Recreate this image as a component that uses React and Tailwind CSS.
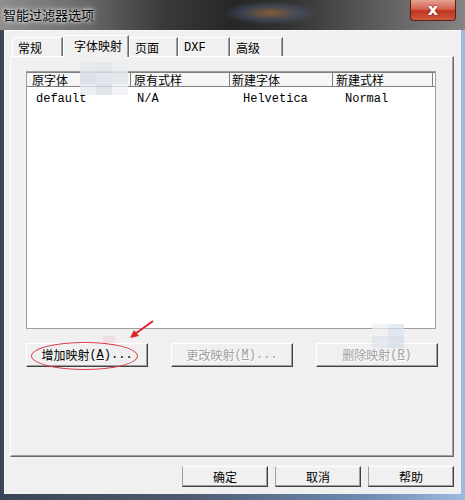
import React from "react";

const cjk = "[font-family:'Noto_Sans_CJK_SC','Liberation_Sans',sans-serif]";
const mono = "[font-family:'Liberation_Mono',monospace]";

function Tab({ label, w, selected, latin }) {
  if (selected) {
    return (
      <div
        className={`relative z-10 -mb-px flex h-[22px] ${w} items-start justify-center border-l border-t border-white bg-[#f0f0f0] pt-[1px] pl-[4px] shadow-[inset_-1px_0_#a0a0a0] border-r border-r-[#696969] rounded-tl-[2px] text-[12px] text-black`}
      >
        {label}
      </div>
    );
  }
  return (
    <div
      className={`flex h-[19px] ${w} items-start justify-start border-l border-t border-white bg-[#f0f0f0] pt-[1px] pl-[5px] shadow-[inset_-1px_0_#a0a0a0] border-r border-r-[#696969] rounded-tl-[2px] text-[12px] text-black ${latin ? mono : ""}`}
    >
      {label}
    </div>
  );
}

function Btn({ label, key1, tail, w, disabled }) {
  return (
    <div
      className={`flex h-[24px] ${w} items-center justify-center border border-t-white border-l-white border-r-[#404040] border-b-[#404040] bg-[#f0f0f0] shadow-[inset_-1px_-1px_#a0a0a0] text-[12px] ${
        disabled ? "text-[#a0a0a0] [text-shadow:1px_1px_0_#ffffff]" : "text-black"
      }`}
    >
      <span>{label}</span>
      <span className={`${mono} text-[12px]`}>
        (<span className="underline">{key1}</span>){tail}
      </span>
    </div>
  );
}

function DlgBtn({ children }) {
  return (
    <div className="flex h-[21px] w-[86px] items-center justify-center border border-t-white border-l-[#a0a0a0] border-r-[#404040] border-b-[#404040] bg-[#f0f0f0] shadow-[inset_-1px_-1px_#a0a0a0] text-[12px] text-black">
      {children}
    </div>
  );
}

export default function App() {
  const cols = [
    { h: "原字体", w: "w-[104px]", hp: "pl-[5px]", v: "default", vp: "pl-[9px]" },
    { h: "原有式样", w: "w-[99px]", hp: "pl-[3px]", v: "N/A", vp: "pl-[6px]" },
    { h: "新建字体", w: "w-[103px]", hp: "pl-[2px]", v: "Helvetica", vp: "pl-[13px]" },
    { h: "新建式样", w: "w-[100px]", hp: "pl-[3px]", v: "Normal", vp: "pl-[12px]" },
  ];
  return (
    <div
      className={`relative flex h-[500px] w-[465px] flex-col overflow-hidden bg-[linear-gradient(to_right,#3a4656_0%,#4d5b70_40%,#6f8db5_80%,#9dbbe0_100%)] ${cjk}`}
    >
      {/* Title bar */}
      <div className="relative flex h-[30px] shrink-0 items-center bg-[linear-gradient(to_right,#8e8e8e_0%,#6a6a6a_18%,#3a3a3a_35%,#262626_50%,#333333_62%,#5a5a5a_80%,#858585_100%)] pl-[3px]">
        <div className="absolute left-[225px] top-[2px] h-[22px] w-[90px] rounded-full bg-[radial-gradient(ellipse_at_center,rgba(200,130,60,0.55)_0%,rgba(90,110,150,0.35)_45%,rgba(0,0,0,0)_75%)]" />
        <span className="relative text-[13px] text-black [text-shadow:0_0_6px_#ffffff,0_0_3px_#ffffff]">
          智能过滤器选项
        </span>
        <div className="absolute right-[9px] top-0 flex h-[21px] w-[46px] items-center justify-center rounded-b-[4px] border border-t-0 border-[#5a2018] bg-[linear-gradient(to_bottom,#e8a090_0%,#d46450_45%,#c0341e_55%,#d05a40_100%)]">
          <span className="[font-family:'DejaVu_Sans',sans-serif] text-[16px] font-bold leading-none text-white [text-shadow:0_0_2px_#5a1a10]">
            x
          </span>
        </div>
      </div>

      {/* Client area */}
      <div className="mx-[4px] flex h-[464px] shrink-0 flex-col bg-[#f0f0f0] shadow-[inset_1px_1px_#f8f8f8]">
        {/* Tabs */}
        <div className="flex h-[26px] items-end pl-[8px]">
          <Tab label="常规" w="w-[51px]" />
          <Tab label="字体映射" w="w-[66px]" selected />
          <Tab label="页面" w="w-[49px]" />
          <Tab label="DXF" w="w-[52px]" latin />
          <Tab label="高级" w="w-[53px]" />
        </div>

        {/* Panel */}
        <div className="ml-[6px] mr-[7px] flex h-[401px] flex-col border border-t-white border-l-white border-r-[#696969] border-b-[#696969] shadow-[inset_-1px_-1px_#a0a0a0] pl-[15px] pt-[14px]">
          {/* List view */}
          <div className="relative flex h-[258px] w-[410px] flex-col border border-[#a0a0a0] bg-white">
            <div className="flex h-[15px] border-b border-[#808080] border-t border-t-[#808080]">
              {cols.map((c, i) => (
                <div
                  key={i}
                  className={`flex h-full ${c.w} items-center border-r border-[#808080] bg-[#f6f6f6] ${c.hp} text-[12px] leading-none text-black`}
                >
                  {c.h}
                </div>
              ))}
            </div>
            <div className="flex h-[24px] items-center">
              {cols.map((c, i) => (
                <div
                  key={i}
                  className={`${c.w} ${c.vp} ${mono} text-[12px] leading-none text-black`}
                >
                  {c.v}
                </div>
              ))}
            </div>
          </div>

          {/* Action buttons */}
          <div className="mt-[14px] flex gap-[23px]">
            <Btn w="w-[122px]" label="增加映射" key1="A" tail="..." />
            <Btn w="w-[122px]" label="更改映射" key1="M" tail="..." disabled />
            <Btn w="w-[122px]" label="删除映射" key1="R" tail="" disabled />
          </div>
        </div>

        {/* Dialog buttons */}
        <div className="mt-[9px] flex justify-end gap-[7px] pr-[7px]">
          <DlgBtn>确定</DlgBtn>
          <DlgBtn>取消</DlgBtn>
          <DlgBtn>帮助</DlgBtn>
        </div>
      </div>

      {/* Mosaic watermark blotches */}
      <div className="absolute left-[80px] top-[62px] grid grid-cols-3 opacity-80">
        <div className="h-[11px] w-[16px] bg-[#e4e8ee]" />
        <div className="h-[11px] w-[16px] bg-[#dfe5ec]" />
        <div className="h-[11px] w-[16px] bg-[#e9edf2]" />
        <div className="h-[11px] w-[16px] bg-[#d6dde6]" />
        <div className="h-[11px] w-[16px] bg-[#dde3ea]" />
        <div className="h-[11px] w-[16px] bg-[#e2e7ed]" />
        <div className="h-[11px] w-[16px] bg-[#e7ebf0]" />
        <div className="h-[11px] w-[16px] bg-[#d9e0e8]" />
        <div className="h-[11px] w-[16px] bg-[#eef1f4]" />
      </div>
      <div className="absolute left-[372px] top-[324px] grid grid-cols-2 opacity-70">
        <div className="h-[12px] w-[16px] bg-[#f0f0f0]" />
        <div className="h-[12px] w-[16px] bg-[#dbe4ee]" />
        <div className="h-[12px] w-[16px] bg-[#dfe6ee]" />
        <div className="h-[12px] w-[16px] bg-[#d3dde8]" />
      </div>
      <div className="absolute left-[103px] top-[336px] h-[7px] w-[12px] bg-[#f0dfe2]" />

      {/* Red annotation ellipse & arrow */}
      <div className="absolute left-[31px] top-[342px] h-[28px] w-[107px] rounded-[50%] border border-[#e0404a]" />
      <svg
        className="absolute left-[125px] top-[318px]"
        width="32"
        height="24"
        viewBox="0 0 32 24"
      >
        <line x1="28" y1="3" x2="10" y2="16" stroke="#e0202a" strokeWidth="2" />
        <polygon points="5,20 9,12 14,18" fill="#e0202a" />
      </svg>
    </div>
  );
}
